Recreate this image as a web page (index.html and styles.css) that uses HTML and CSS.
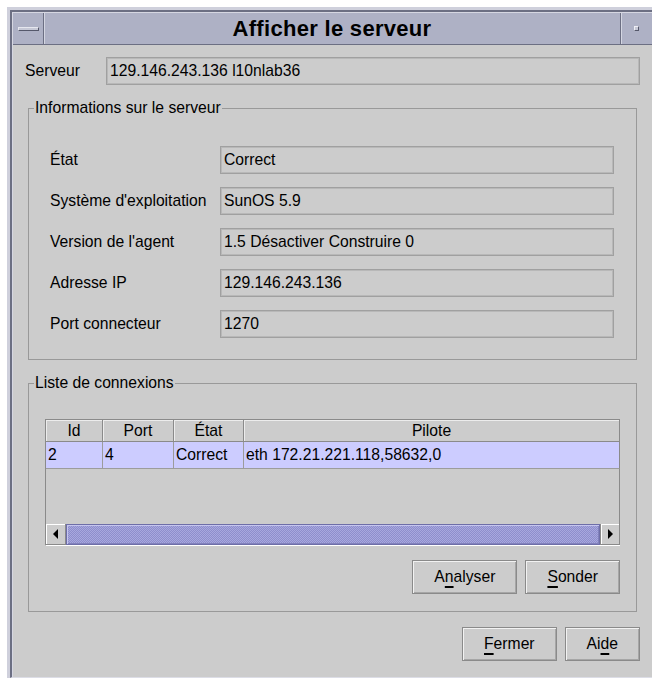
FILE: index.html
```html
<!DOCTYPE html>
<html lang="fr">
<head>
<meta charset="utf-8">
<title>Afficher le serveur</title>
<link rel="stylesheet" href="styles.css">
</head>
<body>
<div class="frame">
  <div class="window">
    <div class="titlebar">
      <div class="tb-btn tb-menu"><span class="dash"></span></div>
      <div class="tb-title">Afficher le serveur</div>
      <div class="tb-btn tb-max"><span class="sq"></span></div>
    </div>

    <div class="content">
      <div class="server-row">
        <span class="label">Serveur</span>
        <div class="field">129.146.243.136 l10nlab36</div>
      </div>

      <fieldset class="group">
        <legend>Informations sur le serveur</legend>
        <div class="form">
          <span>État</span><div class="field">Correct</div>
          <span>Système d'exploitation</span><div class="field">SunOS 5.9</div>
          <span>Version de l'agent</span><div class="field">1.5 Désactiver Construire 0</div>
          <span>Adresse IP</span><div class="field">129.146.243.136</div>
          <span>Port connecteur</span><div class="field">1270</div>
        </div>
      </fieldset>

      <fieldset class="group conns">
        <legend>Liste de connexions</legend>
        <div class="table">
          <div class="thead">
            <div class="th">Id</div>
            <div class="th">Port</div>
            <div class="th">État</div>
            <div class="th">Pilote</div>
          </div>
          <div class="trow selected">
            <div class="td">2</div>
            <div class="td">4</div>
            <div class="td">Correct</div>
            <div class="td">eth 172.21.221.118,58632,0</div>
          </div>
          <div class="viewport"></div>
          <div class="hscroll">
            <div class="sb-btn"><span class="arrow left"></span></div>
            <div class="sb-thumb"></div>
            <div class="sb-btn"><span class="arrow right"></span></div>
          </div>
        </div>
        <div class="actions">
          <button class="btn">A<span class="mn">n</span>alyser</button>
          <button class="btn"><span class="mn">S</span>onder</button>
        </div>
      </fieldset>

      <div class="footer">
        <button class="btn"><span class="mn">F</span>ermer</button>
        <button class="btn">Ai<span class="mn">d</span>e</button>
      </div>
    </div>
  </div>
</div>
</body>
</html>
```

FILE: styles.css
```css
* {
  box-sizing: border-box;
}

html,
body {
  margin: 0;
  height: 100%;
}

body {
  background: #ffffff;
  font-family: "Liberation Sans", Arial, sans-serif;
  font-size: 15.7px;
  color: #000;
  overflow: hidden;
}

/* outer window decoration */
.frame {
  margin: 7px 0 0 7px;
  padding: 3px 0 0 3px;
  height: calc(100% - 7px);
  background: #cfd0dc;
}

.window {
  height: 100%;
  display: flex;
  flex-direction: column;
  border-left: 2px solid #6c6f83;
  border-top: 2px solid #6c6f83;
  border-bottom: 1px solid #dcdde6;
  padding: 1px 0 0 1px;
  box-shadow: inset 1px 1px 0 #d6d7e2;
  background: #cccccc;
}

/* title bar */
.titlebar {
  display: flex;
  height: 32px;
  flex: none;
  background: #aeb1c5;
  border-bottom: 1px solid #6c6f83;
}

.tb-btn {
  width: 31px;
  flex: none;
  display: flex;
  align-items: center;
  justify-content: center;
}

.tb-menu {
  border-right: 1px solid #6c6f83;
  box-shadow: 1px 0 0 #d4d6e2;
}

.tb-max {
  width: 32px;
  border-left: 1px solid #6c6f83;
  box-shadow: inset 1px 0 0 #d4d6e2;
}

.dash {
  width: 21px;
  height: 4px;
  background: #c6c8d6;
  border-top: 1px solid #e6e7ef;
  border-left: 1px solid #e6e7ef;
  border-right: 1px solid #55586b;
  border-bottom: 1px solid #55586b;
}

.sq {
  width: 5px;
  height: 5px;
  background: #c6c8d6;
  border-top: 1px solid #eeeef4;
  border-left: 1px solid #eeeef4;
  border-right: 1px solid #55586b;
  border-bottom: 1px solid #55586b;
}

.tb-title {
  flex: 1;
  text-align: center;
  font-weight: bold;
  font-size: 22px;
  letter-spacing: 0.3px;
  line-height: 31px;
}

/* dialog body */
.content {
  flex: 1;
  padding: 12px 12px 0 12px;
}

.server-row {
  display: flex;
  align-items: center;
}

.server-row .label {
  width: 81px;
  flex: none;
}

.server-row .field {
  flex: 1;
}

.field {
  height: 28px;
  padding: 0 3px;
  display: flex;
  align-items: center;
  white-space: nowrap;
  border: 1px solid #a0a0a0;
  box-shadow: inset 1px 1px 0 #b8b8b8, inset -1px -1px 0 #b8b8b8;
}

.group {
  margin: 14px 3px 0 3px;
  padding: 0;
  min-width: 0;
  border: 1px solid #999999;
}

.group legend {
  margin-left: 5px;
  padding: 0 1px;
  line-height: 18px;
}

.form {
  display: grid;
  grid-template-columns: 170px 1fr;
  grid-auto-rows: 28px;
  row-gap: 13px;
  align-items: center;
  padding: 29px 22px 21px 21px;
}

/* connection table */
.conns .table {
  margin: 27px 16px 0 16px;
  height: 127px;
  display: flex;
  flex-direction: column;
  border-left: 1px solid #8a8a8a;
  border-bottom: 1px solid #ffffff;
}

.thead,
.trow {
  display: grid;
  grid-template-columns: 57px 71px 70px 1fr;
  flex: none;
}

.thead {
  height: 23px;
  border-top: 1px solid #8a8a8a;
}

.th {
  text-align: center;
  line-height: 21px;
  border-right: 1px solid #8a8a8a;
  border-bottom: 1px solid #8a8a8a;
  box-shadow: inset 1px 1px 0 #ececec;
}

.trow {
  height: 27px;
}

.trow.selected {
  background: #ccccff;
}

.td {
  padding-left: 2px;
  line-height: 26px;
  white-space: nowrap;
  border-right: 1px solid #9c9c9c;
  border-bottom: 1px solid #9c9c9c;
}

.td:last-child {
  border-right-color: #8a8a8a;
}

.viewport {
  flex: 1;
  border-right: 1px solid #8a8a8a;
}

.hscroll {
  height: 21px;
  flex: none;
  display: flex;
}

.sb-btn {
  width: 20px;
  flex: none;
  display: flex;
  align-items: center;
  justify-content: center;
  background: #cccccc;
  border-right: 1px solid #8a8a8a;
  border-bottom: 1px solid #8a8a8a;
  box-shadow: inset 1px 1px 0 #ffffff;
}

.sb-btn:last-child {
  border-left: 1px solid #8a8a8a;
}

.arrow {
  width: 0;
  height: 0;
  border-top: 5px solid transparent;
  border-bottom: 5px solid transparent;
}

.arrow.left {
  border-right: 5px solid #000;
}

.arrow.right {
  border-left: 5px solid #000;
}

.sb-thumb {
  flex: 1;
  border: 1px solid #6e6ea8;
  box-shadow: inset 1px 1px 0 #c6c6ee, inset -1px -1px 0 #8282bc;
  background-color: #a0a0d8;
  background-image: repeating-conic-gradient(#8e8ecc 0 25%, #a8a8de 0 50%);
  background-size: 2px 2px;
}

/* buttons */
.actions,
.footer {
  display: flex;
  justify-content: flex-end;
  gap: 8px;
}

.actions {
  padding: 14px 16px 17px 16px;
}

.footer {
  margin-top: 15px;
}

.btn {
  height: 34px;
  padding: 0 21px;
  font: inherit;
  color: #000;
  background: #cccccc;
  border: 1px solid #8a8a8a;
  box-shadow: inset 1px 1px 0 #f2f2f2, inset -1px -1px 0 #a6a6a6;
}

.mn {
  text-decoration: underline;
  text-decoration-thickness: 2px;
  text-underline-offset: 4px;
}
```
